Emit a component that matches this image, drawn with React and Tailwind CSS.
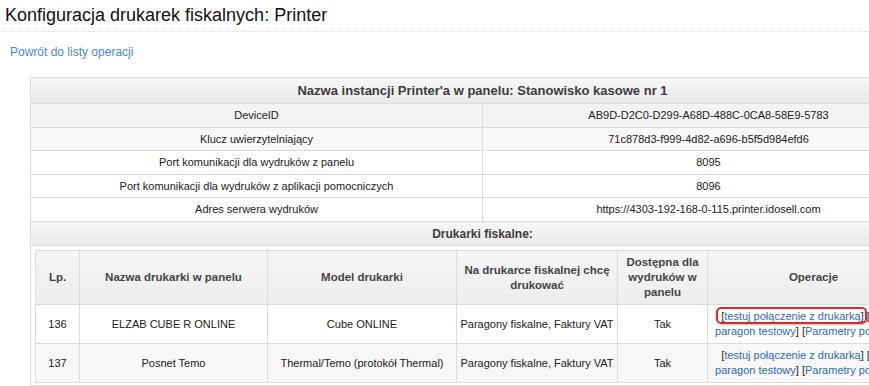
import React from "react";

const info = [
  { label: "DeviceID", value: "AB9D-D2C0-D299-A68D-488C-0CA8-58E9-5783", bg: "bg-[#f3f3f3]", h: "h-[24px]" },
  { label: "Klucz uwierzytelniający", value: "71c878d3-f999-4d82-a696-b5f5d984efd6", bg: "bg-[#f8f8f8]", h: "h-[23px]" },
  { label: "Port komunikacji dla wydruków z panelu", value: "8095", bg: "bg-white", h: "h-[24px]" },
  { label: "Port komunikacji dla wydruków z aplikacji pomocniczych", value: "8096", bg: "bg-white", h: "h-[23px]" },
  { label: "Adres serwera wydruków", value: "https://4303-192-168-0-115.printer.idosell.com", bg: "bg-white", h: "h-[24px]" },
];

const printers = [
  { lp: "136", name: "ELZAB CUBE R ONLINE", model: "Cube ONLINE", docs: "Paragony fiskalne, Faktury VAT", avail: "Tak", bg: "bg-white", marked: true },
  { lp: "137", name: "Posnet Temo", model: "Thermal/Temo (protokół Thermal)", docs: "Paragony fiskalne, Faktury VAT", avail: "Tak", bg: "bg-[#f7f7f7]", marked: false },
];

const Link = ({ children }) => <span className="text-[#2f6cb4]">{children}</span>;

const Operations = ({ marked }) => (
  <div className="leading-[15px]">
    <div>
      <span className="relative">
        <span className="text-[#222]">[</span>
        <Link>testuj połączenie z drukarką</Link>
        <span className="text-[#222]">]</span>
        {marked && (
          <span className="absolute -left-[5px] -right-[3px] -top-[3px] -bottom-[2px] border-2 border-[#e3262a] rounded-[5px] shadow-[0_1px_2px_rgba(0,0,0,0.25)]"></span>
        )}
      </span>{" "}
      <span className="text-[#222]">[</span>
      <Link>drukuj</Link>
    </div>
    <div>
      <Link>paragon testowy</Link>
      <span className="text-[#222]">]</span> <span className="text-[#222]">[</span>
      <Link>Parametry połączeń</Link>
      <span className="text-[#222]">]</span>
    </div>
  </div>
);

export default function App() {
  return (
    <div className="w-[869px] h-[386px] overflow-hidden bg-white font-['Liberation_Sans',Arial,sans-serif] text-[#222]">
      <h1 className="pl-[5px] pt-[4px] pb-[5px] text-[18px] leading-[22px] text-[#111] border-b border-dotted border-[#ddd]">
        Konfiguracja drukarek fiskalnych: Printer
      </h1>
      <div className="pl-[10px] mt-[12px] text-[12px] leading-[16px] text-[#4a8ad0]">Powrót do listy operacji</div>

      <table className="ml-[30px] mt-[17px] w-[904px] table-fixed border-collapse border border-[#dcdcdc] text-[11px]">
        <colgroup>
          <col className="w-[452px]" />
          <col className="w-[452px]" />
        </colgroup>
        <tbody>
          <tr>
            <th colSpan={2} className="h-[26px] p-0 text-center text-[13px] font-bold text-[#3c3c3c] bg-gradient-to-b from-[#f7f7f7] to-[#e9e9e9] border border-[#dcdcdc]">
              Nazwa instancji Printer'a w panelu: Stanowisko kasowe nr 1
            </th>
          </tr>
          {info.map((r) => (
            <tr key={r.label} className={r.bg}>
              <td className={`${r.h} p-0 text-center border border-[#dcdcdc]`}>{r.label}</td>
              <td className={`${r.h} p-0 text-center border border-[#dcdcdc]`}>{r.value}</td>
            </tr>
          ))}
          <tr>
            <th colSpan={2} className="h-[24px] p-0 text-center text-[12px] font-bold text-[#3c3c3c] bg-gradient-to-b from-[#f7f7f7] to-[#e9e9e9] border border-[#dcdcdc]">
              Drukarki fiskalne:
            </th>
          </tr>
          <tr>
            <td colSpan={2} className="p-[4px] pb-[2px] bg-white border border-[#dcdcdc]">
              <table className="w-full table-fixed border-collapse border border-[#dcdcdc] text-[11px]">
                <colgroup>
                  <col className="w-[44px]" />
                  <col className="w-[188px]" />
                  <col className="w-[189px]" />
                  <col className="w-[161px]" />
                  <col className="w-[90px]" />
                  <col />
                </colgroup>
                <thead>
                  <tr className="bg-gradient-to-b from-[#f5f5f5] to-[#ededed] text-[11.5px] font-bold text-[#444] leading-[15px]">
                    <th className="h-[54px] p-0 border border-[#dcdcdc]">Lp.</th>
                    <th className="p-0 border border-[#dcdcdc]">Nazwa drukarki w panelu</th>
                    <th className="p-0 border border-[#dcdcdc]">Model drukarki</th>
                    <th className="px-[2px] border border-[#dcdcdc]">Na drukarce fiskalnej chcę drukować</th>
                    <th className="px-[6px] border border-[#dcdcdc]">Dostępna dla wydruków w panelu</th>
                    <th className="pl-0 pr-[10px] border border-[#dcdcdc]">Operacje</th>
                  </tr>
                </thead>
                <tbody>
                  {printers.map((p) => (
                    <tr key={p.lp} className={p.bg}>
                      <td className="h-[39px] p-0 text-center border border-[#dcdcdc]">{p.lp}</td>
                      <td className="p-0 text-center border border-[#dcdcdc]">{p.name}</td>
                      <td className="p-0 text-center border border-[#dcdcdc]">{p.model}</td>
                      <td className="p-0 text-center border border-[#dcdcdc]">{p.docs}</td>
                      <td className="p-0 text-center border border-[#dcdcdc]">{p.avail}</td>
                      <td className="pl-0 pr-[16px] text-center border border-[#dcdcdc]">
                        <Operations marked={p.marked} />
                      </td>
                    </tr>
                  ))}
                </tbody>
              </table>
            </td>
          </tr>
        </tbody>
      </table>
    </div>
  );
}
